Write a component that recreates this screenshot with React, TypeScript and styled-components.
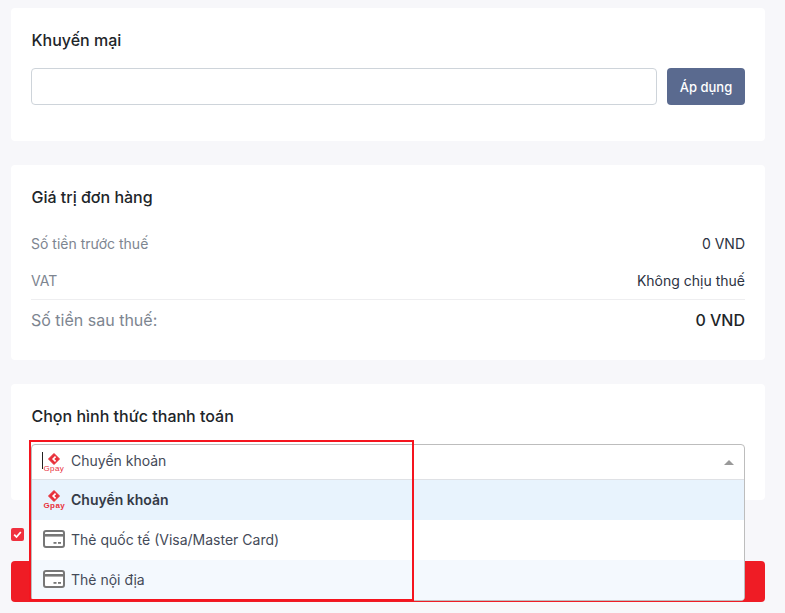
import React from "react";
import styled, { createGlobalStyle } from "styled-components";

const GlobalStyle = createGlobalStyle`
  html, body {
    margin: 0;
    padding: 0;
    height: 100%;
    overflow: hidden;
    background: #f7f7fa;
  }
  * {
    box-sizing: border-box;
  }
`;

const Page = styled.div`
  position: relative;
  width: 785px;
  height: 613px;
  padding: 8px 20px 0 11px;
  display: flex;
  flex-direction: column;
  gap: 24px;
  font-family: Inter, "Liberation Sans", sans-serif;
  color: #2c3242;
  overflow: hidden;
`;

const Card = styled.section<{ $height: number }>`
  background: #fff;
  border-radius: 4px;
  height: ${(props) => props.$height}px;
  padding: 21px 20px 0 20px;
`;

const CardTitle = styled.h3`
  margin: 0 0 0 0.5px;
  font-size: 16px;
  line-height: 22px;
  font-weight: 500;
  color: #212529;
`;

const PromoRow = styled.div`
  display: flex;
  gap: 10px;
  margin-top: 17px;
`;

const PromoInput = styled.div`
  flex: 1;
  height: 37px;
  border: 1px solid #ced4da;
  border-radius: 4px;
  background: #fff;
`;

const ApplyButton = styled.button`
  width: 78px;
  height: 37px;
  border: none;
  border-radius: 4px;
  background: #5a6a8f;
  color: #fff;
  font-family: inherit;
  font-size: 13px;
  font-weight: 500;
  padding: 0;
`;

const SummaryRows = styled.div`
  margin-top: 17px;
`;

const SummaryRow = styled.div`
  display: flex;
  justify-content: space-between;
  align-items: center;
  height: 37px;
  font-size: 14px;
`;

const SummaryLabel = styled.span`
  color: #7d8590;
`;

const SummaryValue = styled.span`
  color: #2c3242;
`;

const TotalRow = styled.div`
  display: flex;
  justify-content: space-between;
  align-items: center;
  height: 41px;
  border-top: 1px solid #eeeef0;
`;

const TotalLabel = styled.span`
  font-size: 16px;
  color: #7d8590;
`;

const TotalValue = styled.span`
  font-size: 16px;
  font-weight: 500;
  color: #212529;
`;

const BottomGroup = styled.div`
  margin-top: -4px;
  display: flex;
  flex-direction: column;
`;

const TermsRow = styled.div`
  height: 41px;
  padding-top: 8px;
`;

const Check = styled.span`
  width: 13px;
  height: 13px;
  border-radius: 2px;
  background: #f0303e;
  display: flex;
  align-items: center;
  justify-content: center;
`;

const PayButton = styled.div`
  height: 41px;
  background: #ef1c25;
  border-radius: 4px;
`;

const Dropdown = styled.div`
  position: absolute;
  left: 31px;
  top: 444px;
  width: 714px;
  height: 157px;
  border: 1px solid #bdbdbd;
  border-radius: 4px;
  background: #fff;
  overflow: hidden;
`;

const SelectedRow = styled.div`
  height: 35px;
  padding: 0 0 0 11px;
  border-bottom: 1px solid #dfe1e5;
  display: flex;
  align-items: center;
  gap: 6px;
  font-size: 14px;
  color: #444a58;
  position: relative;
`;

const SelectedLabel = styled.span`
  margin-bottom: 4px;
`;

const Caret = styled.span`
  position: absolute;
  right: 10px;
  top: 15px;
  width: 0;
  height: 0;
  border-left: 5px solid transparent;
  border-right: 5px solid transparent;
  border-bottom: 5px solid #999;
`;

const Cursor = styled.span`
  position: absolute;
  left: 10px;
  top: 7px;
  width: 1px;
  height: 17px;
  background: #222;
`;

const Option = styled.div<{ $tone: "active" | "plain" | "alt"; $bold?: boolean }>`
  height: 40px;
  display: flex;
  align-items: center;
  gap: 6px;
  padding: 0 0 2px 11px;
  font-size: 14px;
  font-weight: ${(props) => (props.$bold ? 600 : 400)};
  color: ${(props) => (props.$bold ? "#343a46" : "#444a58")};
  background: ${(props) =>
    props.$tone === "active" ? "#e8f3fd" : props.$tone === "alt" ? "#f4f9fe" : "#fff"};
`;

const Annotation = styled.div`
  position: absolute;
  left: 29px;
  top: 440px;
  width: 385px;
  height: 161px;
  border: 2px solid #f5141e;
  pointer-events: none;
`;

const GpayLabel = styled.text`
  font-family: "Liberation Sans", Arial, sans-serif;
  font-size: 8px;
  letter-spacing: 0.4px;
  fill: #e8303a;
`;

function GpayIcon(): JSX.Element {
  return (
    <svg width="22" height="24" viewBox="0 0 22 24">
      <path d="M11 3.5 L16.5 9 L11 14.5 L5.5 9 Z" fill="#e8303a" stroke="#e8303a" strokeLinejoin="round" />
      <path d="M12.6 6.6 L10.2 9 L12.6 11.4" fill="none" stroke="#fff" strokeWidth="1.7" />
      <GpayLabel x="0.5" y="21">Gpay</GpayLabel>
    </svg>
  );
}

function CardIcon(): JSX.Element {
  return (
    <svg width="22" height="18" viewBox="0 0 22 18">
      <rect x="1" y="1" width="20" height="16" rx="2" fill="#fff" stroke="#777" strokeWidth="2" />
      <rect x="1" y="4" width="20" height="2.6" fill="#777" />
      <rect x="10.5" y="12" width="3" height="1.8" fill="#777" />
      <rect x="15" y="12" width="3" height="1.8" fill="#777" />
    </svg>
  );
}

export default function App(): JSX.Element {
  return (
    <Page>
      <GlobalStyle />
      <Card $height={133}>
        <CardTitle>Khuyến mại</CardTitle>
        <PromoRow>
          <PromoInput />
          <ApplyButton>Áp dụng</ApplyButton>
        </PromoRow>
      </Card>

      <Card $height={195}>
        <CardTitle>Giá trị đơn hàng</CardTitle>
        <SummaryRows>
          <SummaryRow>
            <SummaryLabel>Số tiền trước thuế</SummaryLabel>
            <SummaryValue>0 VND</SummaryValue>
          </SummaryRow>
          <SummaryRow>
            <SummaryLabel>VAT</SummaryLabel>
            <SummaryValue>Không chịu thuế</SummaryValue>
          </SummaryRow>
          <TotalRow>
            <TotalLabel>Số tiền sau thuế:</TotalLabel>
            <TotalValue>0 VND</TotalValue>
          </TotalRow>
        </SummaryRows>
      </Card>

      <Card $height={116}>
        <CardTitle>Chọn hình thức thanh toán</CardTitle>
      </Card>

      <BottomGroup>
        <TermsRow>
          <Check>
            <svg width="9" height="9" viewBox="0 0 9 9">
              <path d="M1.2 4.6 L3.5 7 L7.8 2" fill="none" stroke="#fff" strokeWidth="1.8" />
            </svg>
          </Check>
        </TermsRow>
        <PayButton />
      </BottomGroup>

      <Dropdown>
        <SelectedRow>
          <GpayIcon />
          <SelectedLabel>Chuyển khoản</SelectedLabel>
          <Cursor />
          <Caret />
        </SelectedRow>
        <Option $tone="active" $bold>
          <GpayIcon />
          <span>Chuyển khoản</span>
        </Option>
        <Option $tone="plain">
          <CardIcon />
          <span>Thẻ quốc tế (Visa/Master Card)</span>
        </Option>
        <Option $tone="alt">
          <CardIcon />
          <span>Thẻ nội địa</span>
        </Option>
      </Dropdown>
      <Annotation />
    </Page>
  );
}
